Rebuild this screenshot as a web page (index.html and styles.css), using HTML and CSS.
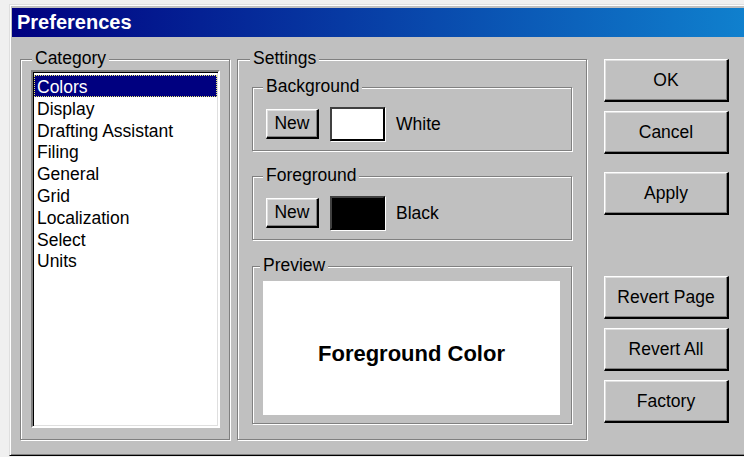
FILE: index.html
```html
<!DOCTYPE html>
<html lang="en">
<head>
<meta charset="utf-8">
<title>Preferences</title>
<link rel="stylesheet" href="styles.css">
</head>
<body>
<div class="window">
  <div class="titlebar">Preferences</div>
  <div class="client">
    <fieldset class="group category">
      <legend class="legend legend-category">Category</legend>
      <ul class="listbox">
        <li class="item selected">Colors</li>
        <li class="item">Display</li>
        <li class="item">Drafting Assistant</li>
        <li class="item">Filing</li>
        <li class="item">General</li>
        <li class="item">Grid</li>
        <li class="item">Localization</li>
        <li class="item">Select</li>
        <li class="item">Units</li>
      </ul>
    </fieldset>

    <fieldset class="group settings">
      <legend class="legend legend-settings">Settings</legend>

      <fieldset class="group sub">
        <legend class="legend legend-sub">Background</legend>
        <div class="color-row">
          <button class="btn btn-new" type="button">New</button>
          <span class="swatch swatch-white"></span>
          <span class="color-name">White</span>
        </div>
      </fieldset>

      <fieldset class="group sub sub-fg">
        <legend class="legend legend-sub">Foreground</legend>
        <div class="color-row">
          <button class="btn btn-new" type="button">New</button>
          <span class="swatch swatch-black"></span>
          <span class="color-name">Black</span>
        </div>
      </fieldset>

      <fieldset class="group sub preview">
        <legend class="legend legend-sub">Preview</legend>
        <div class="preview-area">Foreground Color</div>
      </fieldset>
    </fieldset>

    <div class="actions">
      <button class="btn btn-action" type="button">OK</button>
      <button class="btn btn-action" type="button">Cancel</button>
      <button class="btn btn-action btn-apply" type="button">Apply</button>
      <button class="btn btn-action btn-revert" type="button">Revert Page</button>
      <button class="btn btn-action" type="button">Revert All</button>
      <button class="btn btn-action" type="button">Factory</button>
    </div>
  </div>
</div>
</body>
</html>
```

FILE: styles.css
```css
html, body {
  margin: 0;
  height: 100%;
}

body {
  background: #f0f0f0;
  overflow: hidden;
  font-family: "Liberation Sans", Arial, sans-serif;
  font-size: 17.5px;
  color: #000;
}

/* dialog frame */
.window {
  box-sizing: border-box;
  margin: 4px 0 0 9px;
  width: 760px;
  height: 452px;
  padding: 3px 2px;
  background: #c0c0c0;
  border: 1px solid;
  border-color: #dfdfdf #000 #000 #dfdfdf;
  box-shadow: inset 1px 1px #fff, inset -1px -1px #808080;
  display: flex;
  flex-direction: column;
}

.titlebar {
  height: 29px;
  line-height: 29px;
  padding-left: 5px;
  color: #fff;
  font-weight: bold;
  font-size: 20px;
  background: linear-gradient(to right, #000080, #1084d0);
}

.client {
  flex: 1;
  display: flex;
  align-items: stretch;
  padding: 11px 0 12px 8px;
  min-height: 0;
}

/* etched group boxes */
.group {
  margin: 0;
  min-width: 0;
  border: 1px solid #808080;
  box-shadow: inset 1px 1px #fff, 1px 1px #fff;
}

.legend {
  line-height: 20px;
  padding: 0 3px 2px;
  background: #c0c0c0;
}

.legend-category { margin-left: 1px; }
.legend-settings { margin-left: -2px; }
.legend-sub { margin-left: -3px; }

.category {
  box-sizing: border-box;
  flex: 0 0 210px;
  display: flex;
  flex-direction: column;
  padding: 0 9px 11px 10px;
}

/* list box */
.listbox {
  flex: 1;
  margin: 0;
  padding: 3px 1px 0;
  list-style: none;
  background: #fff;
  border: 2px solid;
  border-color: #808080 #fff #fff #808080;
  box-shadow: inset 1px 1px #000, inset -1px -1px #dfdfdf;
}

.item {
  box-sizing: border-box;
  height: 21.8px;
  line-height: 18.8px;
  padding: 3px 0 0 3px;
  white-space: nowrap;
}

.selected {
  background: #000080;
  color: #fff;
  outline: 1px dotted #e8e870;
  outline-offset: -1px;
}

.settings {
  box-sizing: border-box;
  flex: 0 0 350px;
  margin-left: 7px;
  padding: 6px 14px 15px 14px;
  display: flex;
  flex-direction: column;
}

.sub {
  padding: 9px 13px 9px 13px;
}

.sub-fg {
  margin-top: 14px;
}

.color-row {
  display: flex;
  align-items: center;
  height: 34px;
}

/* raised push buttons */
.btn {
  font: inherit;
  color: #000;
  background: #c0c0c0;
  padding: 0;
  border-style: solid;
  border-width: 1px 2px 2px 1px;
  border-color: #fff #000 #000 #fff;
  box-shadow: inset -1px -1px #808080, inset 1px 1px #dfdfdf;
}

.btn-new {
  width: 53px;
  height: 30px;
}

.swatch {
  box-sizing: border-box;
  width: 55px;
  height: 34px;
  margin-left: 11px;
  border: 2px solid;
  border-color: #404040 #000 #000 #404040;
  box-shadow: 1px 1px #fff;
}

.swatch-white { background: #fff; }
.swatch-black { background: #000; }

.color-name {
  margin-left: 11px;
}

.preview {
  flex: 1;
  margin-top: 15px;
  padding: 4px 11px 8px 10px;
  display: flex;
  flex-direction: column;
}

.preview-area {
  flex: 1;
  box-sizing: border-box;
  padding-top: 11px;
  background: #fff;
  display: flex;
  align-items: center;
  justify-content: center;
  font-weight: bold;
  font-size: 22px;
}

/* dialog command buttons */
.actions {
  flex: 0 0 125px;
  margin-left: 17px;
  padding-top: 11px;
  display: flex;
  flex-direction: column;
}

.btn-action {
  height: 43px;
  margin-top: 9px;
}

.btn-action:first-child { margin-top: 0; }
.btn-apply { margin-top: 18px; }
.btn-revert { margin-top: 61px; }
```
